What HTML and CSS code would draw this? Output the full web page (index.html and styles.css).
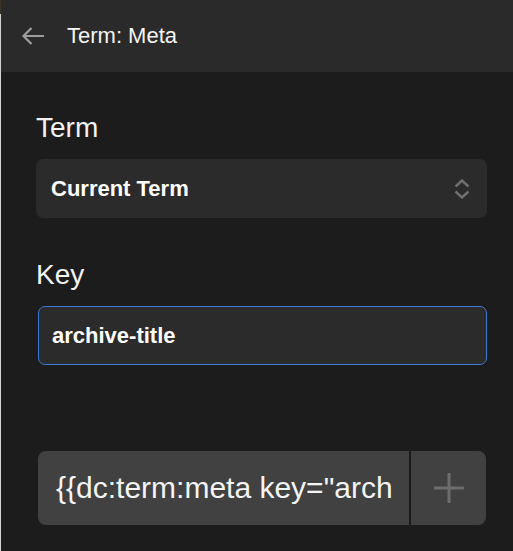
FILE: index.html
```html
<!DOCTYPE html>
<html lang="en">
<head>
<meta charset="utf-8">
<title>Term: Meta</title>
<link rel="stylesheet" href="styles.css">
</head>
<body>
<div class="app">
  <header class="header">
    <svg class="back" width="24" height="20" viewBox="0 0 24 20" aria-hidden="true">
      <path d="M23 10H2.5M10.5 2L2.5 10L10.5 18" fill="none" stroke="#9d9d9d" stroke-width="2.2"/>
    </svg>
    <span class="title">Term: Meta</span>
  </header>
  <main class="content">
    <div class="label">Term</div>
    <div class="select">
      <span class="select-text">Current Term</span>
      <svg class="chev" width="18" height="20" viewBox="0 0 18 20" aria-hidden="true">
        <path d="M2.5 7.5L9 1.5L15.5 7.5M2.5 12.5L9 18.5L15.5 12.5" fill="none" stroke="#6f6f6f" stroke-width="2.4"/>
      </svg>
    </div>
    <div class="label label-key">Key</div>
    <div class="input">archive-title</div>
    <div class="group">
      <div class="code">{{dc:term:meta key="arch</div>
      <div class="add">
        <svg width="30" height="30" viewBox="0 0 30 30" aria-hidden="true">
          <path d="M15 1V29M1 15H29" fill="none" stroke="#6d6d6d" stroke-width="3" stroke-linecap="round"/>
        </svg>
      </div>
    </div>
  </main>
</div>
</body>
</html>
```
FILE: styles.css
```css
html, body {
  margin: 0;
  padding: 0;
  background: #1c1c1c;
  height: 100%;
}
body {
  font-family: "Liberation Sans", Arial, sans-serif;
  color: #ffffff;
}
.app {
  min-height: 100%;
  border-left: 1px solid #d4d4d4;
  border-image: linear-gradient(#3a3222 15px, #d4d4d4 15px) 1;
  box-sizing: border-box;
}
.header {
  height: 72px;
  background: #2a2a2a;
  display: flex;
  align-items: center;
  padding-left: 20px;
  box-sizing: border-box;
}
.back {
  display: block;
}
.title {
  font-size: 22px;
  margin-left: 22px;
  color: #f4f4f4;
}
.content {
  display: flex;
  flex-direction: column;
  padding: 40px 26px 0 35px;
}
.label {
  font-size: 28px;
  line-height: 32px;
  color: #f2f2f2;
}
.label-key {
  margin-top: 41px;
}
.select {
  margin-top: 15px;
  height: 59px;
  background: #2b2b2b;
  border-radius: 7px;
  display: flex;
  align-items: center;
  justify-content: space-between;
  padding: 0 16px 0 15px;
}
.select-text {
  font-size: 22px;
  font-weight: bold;
}
.chev {
  display: block;
}
.input {
  margin-top: 15px;
  margin-left: 2px;
  height: 59px;
  box-sizing: border-box;
  border: 1px solid #3a7ad8;
  border-radius: 7px;
  background: #2b2b2b;
  display: flex;
  align-items: center;
  padding-left: 13px;
  font-size: 22px;
  font-weight: bold;
}
.group {
  margin-top: 86px;
  margin-left: 2px;
  margin-right: 1px;
  height: 74px;
  display: flex;
  gap: 2px;
}
.code {
  flex: 1;
  min-width: 0;
  background: #414141;
  border-radius: 8px 0 0 8px;
  display: flex;
  align-items: center;
  padding-left: 18px;
  font-size: 30px;
  white-space: nowrap;
  color: #f4f4f4;
}
.add {
  width: 75px;
  background: #414141;
  border-radius: 0 8px 8px 0;
  display: flex;
  align-items: center;
  justify-content: center;
}
.add svg {
  display: block;
}
```
